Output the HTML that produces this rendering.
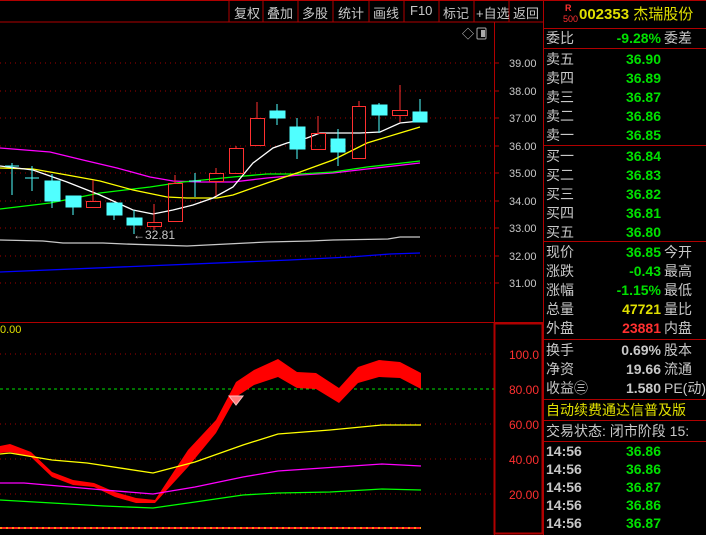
<!DOCTYPE html>
<html><head><meta charset="utf-8"><style>
body{margin:0;width:706px;height:535px;background:#000;overflow:hidden;position:relative;font-family:"Liberation Sans","WenQuanYi Zen Hei","Noto Sans CJK SC",sans-serif}
.t{position:absolute;font-size:14px;line-height:18px;white-space:nowrap}
.w{color:#c8c8c8}.g{color:#00e000}.y{color:#e0e000}.r{color:#ff3030}
.n{font-family:"Liberation Sans",sans-serif;font-weight:bold;font-size:14px;right:45px;text-align:right}
.tm{font-family:"Liberation Sans",sans-serif;font-weight:bold;font-size:14px}
.btn{position:absolute;top:3px;font-size:13px;color:#c8c8c8}
.hl{position:absolute;left:543px;width:163px;height:1px;background:#b00000}
</style></head><body>
<svg width="706" height="535" style="position:absolute;left:0;top:0">
<line x1="0" y1="22" x2="543" y2="22" stroke="#b00000"/>
<line x1="0" y1="0.5" x2="706" y2="0.5" stroke="#b00000"/>
<g stroke="#b00000"><line x1="229" y1="0" x2="229" y2="22"/><line x1="263" y1="0" x2="263" y2="22"/><line x1="298" y1="0" x2="298" y2="22"/><line x1="333" y1="0" x2="333" y2="22"/><line x1="369" y1="0" x2="369" y2="22"/><line x1="404" y1="0" x2="404" y2="22"/><line x1="439" y1="0" x2="439" y2="22"/><line x1="474" y1="0" x2="474" y2="22"/><line x1="509" y1="0" x2="509" y2="22"/></g>
<line x1="494.5" y1="22" x2="494.5" y2="535" stroke="#b00000"/>
<line x1="543.5" y1="0" x2="543.5" y2="535" stroke="#b00000"/>
<line x1="0" y1="322.5" x2="543" y2="322.5" stroke="#b00000"/>
<rect x="494.5" y="323.5" width="48" height="210" fill="none" stroke="#b00000" stroke-width="2"/>
<g stroke="#a00000" stroke-dasharray="1,4">
<line x1="0" y1="63" x2="494" y2="63"/><line x1="0" y1="91" x2="494" y2="91"/><line x1="0" y1="118" x2="494" y2="118"/><line x1="0" y1="146" x2="494" y2="146"/><line x1="0" y1="173" x2="494" y2="173"/><line x1="0" y1="201" x2="494" y2="201"/><line x1="0" y1="228" x2="494" y2="228"/><line x1="0" y1="256" x2="494" y2="256"/><line x1="0" y1="283" x2="494" y2="283"/>
<line x1="0" y1="354" x2="494" y2="354"/><line x1="0" y1="424" x2="494" y2="424"/><line x1="0" y1="459" x2="494" y2="459"/><line x1="0" y1="494" x2="494" y2="494"/>
</g>
<line x1="0" y1="389" x2="494" y2="389" stroke="#00e000" stroke-dasharray="3,3"/>
<line x1="0" y1="528" x2="421" y2="528" stroke="#ff2020" stroke-width="2"/>
<line x1="0" y1="528" x2="421" y2="528" stroke="#ff0" stroke-dasharray="2,4"/>
<g stroke="#b00000"><line x1="494" y1="63" x2="499" y2="63"/><line x1="494" y1="91" x2="499" y2="91"/><line x1="494" y1="118" x2="499" y2="118"/><line x1="494" y1="146" x2="499" y2="146"/><line x1="494" y1="173" x2="499" y2="173"/><line x1="494" y1="201" x2="499" y2="201"/><line x1="494" y1="228" x2="499" y2="228"/><line x1="494" y1="256" x2="499" y2="256"/><line x1="494" y1="283" x2="499" y2="283"/></g>
<g font-size="11" fill="#c8c8c8" font-family="Liberation Sans"><text x="509" y="67">39.00</text><text x="509" y="95">38.00</text><text x="509" y="122">37.00</text><text x="509" y="150">36.00</text><text x="509" y="177">35.00</text><text x="509" y="205">34.00</text><text x="509" y="232">33.00</text><text x="509" y="260">32.00</text><text x="509" y="287">31.00</text></g>
<g font-size="12" fill="#ff3030" font-family="Liberation Sans"><text x="509" y="359">100.0</text><text x="509" y="394">80.00</text><text x="509" y="429">60.00</text><text x="509" y="464">40.00</text><text x="509" y="499">20.00</text></g>
<text x="0" y="333" font-size="11" fill="#e0e000">0.00</text>
<text x="462" y="38" font-size="12" fill="#c8c8c8">◇</text>
<rect x="477" y="28" width="9" height="11" fill="none" stroke="#aaa" rx="1"/><rect x="481" y="30" width="4" height="7" fill="#aaa"/>
<g fill="none" stroke-width="1.3">
<polyline stroke="#ff00ff" points="0,148 50,152 83,160 117,168 150,177 173,181 200,182 233,182 267,178 300,175 333,173 367,169 420,163"/>
<polyline stroke="#00ff00" points="0,209 50,203 100,193 150,187 183,182 233,177 267,174 300,174 333,172 367,167 420,161"/>
<polyline stroke="#ffff00" points="0,168 33,169 67,175 100,181 133,190 167,197 187,198 217,198 233,195 267,183 300,172 333,160 353,150 367,143 400,133 420,127"/>
<polyline stroke="#fff" points="0,166 33,170 67,182 100,195 133,210 153,214 173,210 193,205 213,198 233,187 253,163 273,148 287,143 307,138 320,133 360,133 380,132 400,123 420,121"/>
<polyline stroke="#c8c8c8" points="0,240 43,241 63,243 103,243 125,244 187,246 207,245 247,243 267,242 310,241 333,240 388,239 400,237 420,237"/>
<polyline stroke="#0000ff" points="0,272 290,260 350,257 390,254 420,253"/>
</g>
<g stroke="#50ffff" fill="#50ffff">
<line x1="12" y1="163" x2="12" y2="195"/><line x1="5" y1="166" x2="19" y2="166"/>
<line x1="32" y1="166" x2="32" y2="191"/><line x1="25" y1="178" x2="39" y2="178"/>
<line x1="52" y1="174" x2="52" y2="208"/><rect x="45" y="181" width="15" height="20"/>
<line x1="73" y1="196" x2="73" y2="215"/><rect x="66" y="196" width="15" height="11"/>
<line x1="114" y1="203" x2="114" y2="220"/><rect x="107" y="203" width="15" height="12"/>
<line x1="134" y1="210" x2="134" y2="234"/><rect x="127" y="218" width="15" height="7"/>
<line x1="195" y1="173" x2="195" y2="197"/><line x1="189" y1="181" x2="201" y2="181"/>
<line x1="277" y1="104" x2="277" y2="125"/><rect x="270" y="111" width="15" height="7"/>
<line x1="297" y1="118" x2="297" y2="159"/><rect x="290" y="127" width="15" height="22"/>
<line x1="338" y1="129" x2="338" y2="166"/><rect x="331" y="139" width="14" height="13"/>
<line x1="379" y1="103" x2="379" y2="133"/><rect x="372" y="105" width="15" height="10"/>
<line x1="420" y1="99" x2="420" y2="112"/><rect x="413" y="112" width="14" height="10"/>
</g>
<g stroke="#ff3030" fill="none">
<line x1="93" y1="180" x2="93" y2="201"/><rect x="86.5" y="201.5" width="14" height="6"/>
<line x1="154" y1="204" x2="154" y2="222"/><rect x="147.5" y="222.5" width="14" height="4"/><line x1="154" y1="227" x2="154" y2="230"/>
<line x1="175" y1="175" x2="175" y2="183"/><rect x="168.5" y="183.5" width="14" height="38"/>
<line x1="216" y1="168" x2="216" y2="173"/><rect x="209.5" y="173.5" width="14" height="8"/><line x1="216" y1="182" x2="216" y2="196"/>
<line x1="236" y1="146" x2="236" y2="148"/><rect x="229.5" y="148.5" width="14" height="25"/>
<line x1="257" y1="102" x2="257" y2="118"/><rect x="250.5" y="118.5" width="14" height="27"/>
<line x1="318" y1="116" x2="318" y2="133"/><rect x="311.5" y="133.5" width="14" height="16"/>
<line x1="359" y1="101" x2="359" y2="106"/><rect x="352.5" y="106.5" width="13" height="52"/>
<line x1="400" y1="85" x2="400" y2="110"/><rect x="392.5" y="110.5" width="15" height="5"/><line x1="400" y1="116" x2="400" y2="122"/>
</g>
<text x="133" y="239" font-size="12" fill="#c8c8c8">←32.81</text>
<polygon fill="#ff0000" points="0,446 10,444 31,452 52,472 73,480 94,483 115,492 136,498 155,500 188,450 216,420 236,382 254,370 278,359 297,372 316,373 339,388 358,367 379,360 400,362 421,373 421,389 400,378 379,377 358,383 339,403 316,389 297,388 278,377 254,385 236,397 216,433 188,467 155,503 136,503 115,497 94,487 73,485 52,477 31,457 10,452 0,453"/>
<g fill="none" stroke-width="1.3">
<polyline stroke="#ffff00" points="0,454 10,453 52,460 87,463 153,473 195,462 243,445 278,434 330,430 382,425 421,425"/>
<polyline stroke="#ff00ff" points="0,483 24,483 70,487 104,490 153,494 195,487 243,477 278,471 382,464 421,466"/>
<polyline stroke="#00ff00" points="0,500 52,503 104,506 153,508 195,502 243,495 278,493 330,492 382,489 421,490"/>
</g>
<path d="M229,396 L243,396 L236,405 Z" fill="#ff8080" stroke="#ffc0c0"/>
</svg>
<div class="btn" style="left:234px">复权</div><div class="btn" style="left:267px">叠加</div><div class="btn" style="left:302px">多股</div><div class="btn" style="left:338px">统计</div><div class="btn" style="left:373px">画线</div><div class="btn" style="left:410px">F10</div><div class="btn" style="left:443px">标记</div><div class="btn" style="left:476px">+自选</div><div class="btn" style="left:513px">返回</div>
<div class="t r" style="left:565px;top:3px;font-size:9px;line-height:10px;font-weight:bold">R</div>
<div class="t r" style="left:563px;top:14px;font-size:9px;line-height:10px">500</div>
<div class="t y" style="left:579px;top:6px;font-size:15px"><b>002353</b> 杰瑞股份</div>
<div class="hl" style="top:28px"></div>
<div class="t w" style="left:546px;top:29px">委比</div><div class="t g n" style="top:29px">-9.28%</div><div class="t w" style="left:664px;top:29px">委差</div>
<div class="hl" style="top:48px"></div>
<div class="t w" style="left:546px;top:50px">卖五</div><div class="t g n" style="top:50px">36.90</div>
<div class="t w" style="left:546px;top:69px">卖四</div><div class="t g n" style="top:69px">36.89</div>
<div class="t w" style="left:546px;top:88px">卖三</div><div class="t g n" style="top:88px">36.87</div>
<div class="t w" style="left:546px;top:107px">卖二</div><div class="t g n" style="top:107px">36.86</div>
<div class="t w" style="left:546px;top:126px">卖一</div><div class="t g n" style="top:126px">36.85</div>
<div class="hl" style="top:145px"></div>
<div class="t w" style="left:546px;top:147px">买一</div><div class="t g n" style="top:147px">36.84</div>
<div class="t w" style="left:546px;top:166px">买二</div><div class="t g n" style="top:166px">36.83</div>
<div class="t w" style="left:546px;top:185px">买三</div><div class="t g n" style="top:185px">36.82</div>
<div class="t w" style="left:546px;top:204px">买四</div><div class="t g n" style="top:204px">36.81</div>
<div class="t w" style="left:546px;top:223px">买五</div><div class="t g n" style="top:223px">36.80</div>
<div class="hl" style="top:241px"></div>
<div class="t w" style="left:546px;top:243px">现价</div><div class="t g n" style="top:243px">36.85</div><div class="t w" style="left:664px;top:243px">今开</div>
<div class="t w" style="left:546px;top:262px">涨跌</div><div class="t g n" style="top:262px">-0.43</div><div class="t w" style="left:664px;top:262px">最高</div>
<div class="t w" style="left:546px;top:281px">涨幅</div><div class="t g n" style="top:281px">-1.15%</div><div class="t w" style="left:664px;top:281px">最低</div>
<div class="t w" style="left:546px;top:300px">总量</div><div class="t y n" style="top:300px">47721</div><div class="t w" style="left:664px;top:300px">量比</div>
<div class="t w" style="left:546px;top:319px">外盘</div><div class="t r n" style="top:319px">23881</div><div class="t w" style="left:664px;top:319px">内盘</div>
<div class="hl" style="top:339px"></div>
<div class="t w" style="left:546px;top:341px">换手</div><div class="t w n" style="top:341px">0.69%</div><div class="t w" style="left:664px;top:341px">股本</div>
<div class="t w" style="left:546px;top:360px">净资</div><div class="t w n" style="top:360px">19.66</div><div class="t w" style="left:664px;top:360px">流通</div>
<div class="t w" style="left:546px;top:379px">收益㊂</div><div class="t w n" style="top:379px">1.580</div><div class="t w" style="left:664px;top:379px">PE(动)</div>
<div class="hl" style="top:399px"></div>
<div class="t y" style="left:546px;top:401px">自动续费通达信普及版</div>
<div class="hl" style="top:420px"></div>
<div class="t w" style="left:546px;top:422px">交易状态: 闭市阶段 15:</div>
<div class="hl" style="top:441px"></div>
<div class="t w tm" style="left:546px;top:442px">14:56</div><div class="t g n" style="top:442px">36.86</div>
<div class="t w tm" style="left:546px;top:460px">14:56</div><div class="t g n" style="top:460px">36.86</div>
<div class="t w tm" style="left:546px;top:478px">14:56</div><div class="t g n" style="top:478px">36.87</div>
<div class="t w tm" style="left:546px;top:496px">14:56</div><div class="t g n" style="top:496px">36.86</div>
<div class="t w tm" style="left:546px;top:514px">14:56</div><div class="t g n" style="top:514px">36.87</div>
</body></html>
